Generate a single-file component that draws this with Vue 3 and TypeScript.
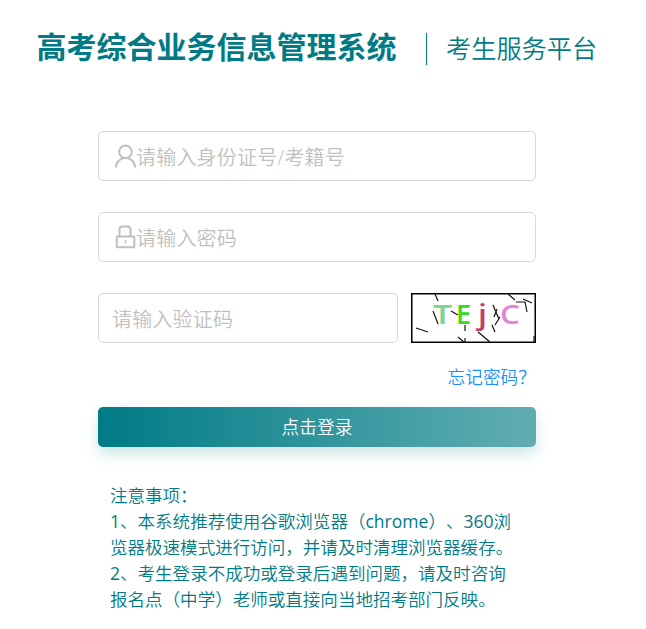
<script setup lang="ts">
import { ref } from 'vue'

interface TextRun {
  text: string
  latin: boolean
}

const account = ref('')
const password = ref('')
const captcha = ref('')

const splitRuns = (line: string): TextRun[] =>
  line
    .split(/([A-Za-z0-9]+)/)
    .filter(Boolean)
    .map((text) => ({ text, latin: /^[A-Za-z0-9]/.test(text) }))

const notices: TextRun[][] = [
  '注意事项：',
  '1、本系统推荐使用谷歌浏览器（chrome）、360浏',
  '览器极速模式进行访问，并请及时清理浏览器缓存。',
  '2、考生登录不成功或登录后遇到问题，请及时咨询',
  '报名点（中学）老师或直接向当地招考部门反映。',
].map(splitRuns)
</script>

<template>
  <main class="page">
    <header class="header">
      <h1 class="title">高考综合业务信息管理系统</h1>
      <span class="subtitle">考生服务平台</span>
    </header>
    <form class="form" @submit.prevent>
      <label class="field">
        <svg class="icon" viewBox="0 0 22 24" fill="none" stroke="#bfbfbf" stroke-width="2">
          <circle cx="10.500" cy="7.800" r="6.300" />
          <path d="M1 23.500C1 17.800 5 14.100 10.500 14.100S20 17.800 20 23.500" />
        </svg>
        <input v-model="account" type="text" placeholder="请输入身份证号/考籍号" />
      </label>
      <label class="field">
        <svg class="icon" viewBox="0 0 22 24" fill="none" stroke="#bfbfbf" stroke-width="2">
          <rect x="1.800" y="11.500" width="17.500" height="10.800" rx="0.500" />
          <path d="M4.500 11.500V4.500Q4.500 1.500 7.500 1.500H12.500Q15.500 1.500 15.500 4.500V11.500" />
          <path d="M10.500 15V18.500" stroke-width="1.500" />
        </svg>
        <input v-model="password" type="password" placeholder="请输入密码" />
      </label>
      <div class="captcha-row">
        <label class="field captcha-field">
          <input v-model="captcha" type="text" placeholder="请输入验证码" />
        </label>
        <svg class="captcha" width="125" height="50" viewBox="0 0 125 50">
          <rect x="0.750" y="0.750" width="123.500" height="48.500" fill="#fff" stroke="#000" stroke-width="1.500" />
          <g class="letters">
            <text x="22" y="31" fill="#7bd58c" textLength="19" lengthAdjust="spacingAndGlyphs">T</text>
            <text x="45" y="31" fill="#35dc18">E</text>
            <text x="67" y="31" fill="#c83c65" textLength="9" lengthAdjust="spacingAndGlyphs">j</text>
            <text x="89" y="31" fill="#e582d5" textLength="20" lengthAdjust="spacingAndGlyphs">C</text>
          </g>
          <path
            d="M24 1L27 8M22 18L27 31M5 35L17 39M40 18L47 22M54 32V38M47 44L54 50M54 45V50M67 39L79 49M82 12L88 26M89 24L84 32M81 32L84 39M86 16L83 24M97 1L104 7M105 9H114L116 19M112 6L121 10M123 43V49"
            fill="none" stroke="#17110f" stroke-width="1.200"
          />
        </svg>
      </div>
      <a class="forgot">忘记密码？</a>
      <button class="submit" type="submit">点击登录</button>
    </form>
    <section class="notice">
      <p v-for="(runs, row) in notices" :key="row"><span v-for="(run, i) in runs" :key="i" :class="{ latin: run.latin }">{{ run.text }}</span></p>
    </section>
  </main>
</template>

<style>
body {
  background: #fff;
}
</style>

<style scoped>
.page {
  box-sizing: border-box;
  width: 646px;
  height: 629px;
  overflow: hidden;
  font-family: 'Open Sans', 'Noto Sans CJK SC', sans-serif;
  text-spacing-trim: space-all;
  color: #007b85;
}
.header {
  display: flex;
  align-items: center;
  height: 64px;
  padding: 16px 0 0 36.500px;
}
.title {
  margin: 0;
  width: 389.500px;
  font-size: 30px;
  font-weight: 700;
  line-height: 38px;
  padding-bottom: 2px;
  white-space: nowrap;
}
.subtitle {
  height: 32px;
  margin-top: 2px;
  padding-left: 19px;
  border-left: 1px solid #007b85;
  font-size: 25.200px;
  font-weight: 350;
  line-height: 30px;
  white-space: nowrap;
}
.form {
  display: flex;
  flex-direction: column;
  width: 438px;
  margin: 51px 0 0 98px;
}
.field {
  display: flex;
  align-items: center;
  box-sizing: border-box;
  height: 50px;
  margin-bottom: 31px;
  padding: 0 14px 0 16px;
  border: 1px solid #d9d9d9;
  border-radius: 5px;
}
.icon {
  flex: none;
  width: 22px;
  height: 24px;
}
.field input {
  flex: 1;
  min-width: 0;
  height: 46px;
  padding: 2px 0 0;
  margin-left: -1px;
  border: 0;
  outline: 0;
  background: transparent;
  font: 350 20px/44px 'Open Sans', 'Noto Sans CJK SC', sans-serif;
  letter-spacing: 0.200px;
  color: #555;
}
.field input::placeholder {
  color: #bfbfbf;
  opacity: 1;
}
.captcha-row {
  display: flex;
  justify-content: space-between;
  height: 50px;
}
.captcha-field {
  width: 300px;
  padding-left: 14px;
}
.captcha {
  display: block;
}
.letters {
  font: 600 27px 'Open Sans', sans-serif;
}
.forgot {
  align-self: flex-end;
  height: 26px;
  margin: 21px 0 17px;
  font-size: 17.700px;
  font-weight: 350;
  line-height: 26px;
  color: #1890ff;
}
.submit {
  height: 40px;
  padding: 0;
  border: 0;
  border-radius: 5px;
  background: linear-gradient(90deg, #007b85, #62adb3);
  box-shadow: 0 7px 14px rgba(0, 123, 133, 0.2);
  font: 350 17.700px/40px 'Open Sans', 'Noto Sans CJK SC', sans-serif;
  color: #fff;
}
.notice {
  margin: 35px 0 0 110px;
  font-size: 17.550px;
  font-weight: 350;
  line-height: 26px;
  white-space: nowrap;
}
.notice p {
  margin: 0;
}
.latin {
  font-weight: 400;
}
</style>
